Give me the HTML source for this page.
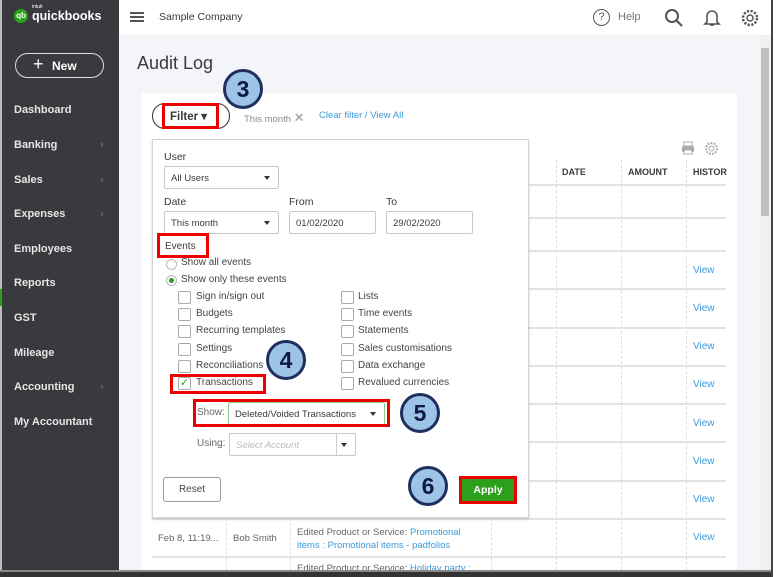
<!DOCTYPE html>
<html><head><style>
*{box-sizing:border-box;margin:0;padding:0}
body{width:778px;height:577px;overflow:hidden;background:#f4f5f8;font-family:"Liberation Sans",sans-serif;position:relative;color:#393a3d}
.a{position:absolute}
.sb{left:0;top:0;width:119px;height:570px;background:#393a3d;border-left:2px solid #bbb}
.nav{left:14px;color:#e6e6e6;font-size:11px;font-weight:bold}
.chev{left:100px;color:#777;font-size:11px}
.top{left:119px;top:0;width:652px;height:35px;background:#fff}
.card{left:142px;top:93px;width:595px;height:477px;background:#fff}
.vl{width:0;border-left:1px dashed #ddd}
.hl{height:2px;background:#e3e3e3}
.view{color:#3b9ad9;font-size:10px}
.pop{left:152px;top:139px;width:377px;height:379px;background:#fff;border:1px solid #d4d4d4;box-shadow:0 1px 3px rgba(0,0,0,.15)}
.lbl{font-size:10.5px;color:#393a3d}
.inp{border:1px solid #c8c8c8;border-radius:2px;height:23px;font-size:9.5px;padding:6px 6px;background:#fff}
.tri{position:absolute;right:8px;top:9px;border-left:3.5px solid transparent;border-right:3.5px solid transparent;border-top:4px solid #333}
.cb{width:13px;height:13px;border:1px solid #aaa;border-radius:2px;background:#fff}
.ct{font-size:10px;color:#444}
.red{border:3px solid #e00}
.num{width:40px;height:40px;border-radius:50%;background:#9dc3e6;border:3px solid #1f2f5e;color:#0e1b40;font-weight:bold;font-size:23px;text-align:center;line-height:34px}
</style></head><body>
<div class="a sb"></div>
<div class="a" style="left:14px;top:9px;width:14px;height:14px;border-radius:50%;background:#2ca01c;color:#fff;font-size:8px;font-weight:bold;text-align:center;line-height:14px">qb</div>
<div class="a" style="left:32px;top:4px;color:#fff;font-size:5px">intuit</div>
<div class="a" style="left:32px;top:9px;color:#fff;font-size:12.5px;font-weight:bold">quickbooks</div>
<div class="a" style="left:15px;top:53px;width:89px;height:25px;border:1.5px solid #ddd;border-radius:13px;color:#fff;font-size:12px;font-weight:bold;padding:5px 0 0 28px"><span style="font-weight:normal;font-size:18px;position:absolute;left:17px;top:0px">+</span><span style="margin-left:8px">New</span></div>
<div class="a nav" style="top:104px">Dashboard</div>
<div class="a nav" style="top:139px">Banking</div><div class="a chev" style="top:139px">›</div>
<div class="a nav" style="top:174px">Sales</div><div class="a chev" style="top:174px">›</div>
<div class="a nav" style="top:208px">Expenses</div><div class="a chev" style="top:208px">›</div>
<div class="a nav" style="top:243px">Employees</div>
<div class="a nav" style="top:277px">Reports</div>
<div class="a" style="left:0;top:289px;width:2px;height:17px;background:#2ca01c"></div>
<div class="a nav" style="top:312px">GST</div>
<div class="a nav" style="top:347px">Mileage</div>
<div class="a nav" style="top:381px">Accounting</div><div class="a chev" style="top:381px">›</div>
<div class="a nav" style="top:416px">My Accountant</div>

<div class="a top"></div>
<div class="a" style="left:130px;top:12px;width:14px;height:2px;background:#555;box-shadow:0 4px 0 #555,0 8px 0 #555"></div>
<div class="a" style="left:159px;top:11px;font-size:10.5px;color:#393a3d">Sample Company</div>
<div class="a" style="left:593px;top:9px;width:17px;height:17px;border:1.5px solid #555;border-radius:50%;font-size:11px;text-align:center;line-height:14px;color:#555">?</div>
<div class="a" style="left:618px;top:11px;font-size:11px;color:#777">Help</div>
<svg class="a" style="left:664px;top:8px" width="20" height="20"><circle cx="8" cy="8" r="6" fill="none" stroke="#555" stroke-width="2"/><line x1="12" y1="12" x2="18" y2="18" stroke="#555" stroke-width="2.2"/></svg>
<svg class="a" style="left:703px;top:8px" width="18" height="20"><path d="M4 14V8a5 5 0 0 1 10 0v6l2 2H2z" fill="none" stroke="#555" stroke-width="1.6"/><path d="M7 17h4" stroke="#555" stroke-width="1.6"/></svg>
<svg class="a" style="left:740px;top:8px" width="20" height="20"><circle cx="10" cy="10" r="3" fill="none" stroke="#555" stroke-width="1.5"/><circle cx="10" cy="10" r="7" fill="none" stroke="#555" stroke-width="2.5" stroke-dasharray="2.2 1.5"/></svg>
<div class="a" style="left:760px;top:35px;width:11px;height:535px;background:#f0f0f0"></div>
<div class="a" style="left:761px;top:48px;width:8px;height:168px;background:#c1c1c1"></div>
<div class="a" style="left:771px;top:0;width:7px;height:577px;background:#fff;border-left:2px solid #444"></div>

<div class="a" style="left:137px;top:53px;font-size:18px;color:#393a3d">Audit Log</div>
<div class="a card"></div>
<div class="a" style="left:152px;top:103px;width:78px;height:26px;border:1.5px solid #333;border-radius:13px"></div>
<div class="a red" style="left:162px;top:103px;width:57px;height:26px"></div>
<div class="a" style="left:170px;top:109px;font-size:11.5px;font-weight:bold">Filter ▾</div>
<div class="a" style="left:244px;top:110px;font-size:9.5px;color:#888">This month <span style="font-size:13px;color:#999">✕</span></div>
<div class="a" style="left:319px;top:110px;font-size:9.5px;color:#3b9ad9">Clear filter / View All</div>
<svg class="a" style="left:681px;top:141px" width="14" height="14"><rect x="3" y="1" width="8" height="4" fill="none" stroke="#aaa"/><rect x="1" y="5" width="12" height="6" rx="1" fill="#aaa"/><rect x="3" y="9" width="8" height="4" fill="#fff" stroke="#aaa"/></svg>
<svg class="a" style="left:704px;top:141px" width="15" height="15"><circle cx="7.5" cy="7.5" r="2.5" fill="none" stroke="#aaa"/><circle cx="7.5" cy="7.5" r="5.5" fill="none" stroke="#aaa" stroke-width="2" stroke-dasharray="1.8 1.3"/></svg>
<div class="a" style="left:562px;top:167px;font-size:9px;font-weight:bold">DATE</div>
<div class="a" style="left:628px;top:167px;font-size:9px;font-weight:bold">AMOUNT</div>
<div class="a" style="left:693px;top:167px;font-size:9px;font-weight:bold">HISTOR</div>
<div class="a vl" style="left:556px;top:160px;height:410px"></div>
<div class="a vl" style="left:621px;top:160px;height:410px"></div>
<div class="a vl" style="left:686px;top:160px;height:410px"></div>
<div class="a vl" style="left:226px;top:518px;height:52px"></div>
<div class="a vl" style="left:290px;top:518px;height:52px"></div>
<div class="a vl" style="left:491px;top:518px;height:52px"></div>
<div class="a hl" style="left:529px;top:184px;width:197px"></div>
<div class="a hl" style="left:529px;top:217px;width:197px"></div>
<div class="a hl" style="left:529px;top:250px;width:197px"></div>
<div class="a hl" style="left:529px;top:288px;width:197px"></div>
<div class="a hl" style="left:529px;top:327px;width:197px"></div>
<div class="a hl" style="left:529px;top:365px;width:197px"></div>
<div class="a hl" style="left:529px;top:403px;width:197px"></div>
<div class="a hl" style="left:529px;top:441px;width:197px"></div>
<div class="a hl" style="left:529px;top:480px;width:197px"></div>
<div class="a hl" style="left:152px;top:518px;width:574px"></div>
<div class="a hl" style="left:152px;top:556px;width:574px"></div>
<div class="a view" style="left:693px;top:265px">View</div>
<div class="a view" style="left:693px;top:303px">View</div>
<div class="a view" style="left:693px;top:341px">View</div>
<div class="a view" style="left:693px;top:379px">View</div>
<div class="a view" style="left:693px;top:418px">View</div>
<div class="a view" style="left:693px;top:456px">View</div>
<div class="a view" style="left:693px;top:494px">View</div>
<div class="a view" style="left:693px;top:532px">View</div>
<div class="a" style="left:158px;top:533px;font-size:9.5px;color:#666">Feb 8, 11:19...</div>
<div class="a" style="left:233px;top:533px;font-size:9.5px;color:#666">Bob Smith</div>
<div class="a" style="left:297px;top:526px;font-size:9.5px;color:#666;line-height:13px">Edited Product or Service: <span style="color:#3b9ad9">Promotional<br>items : Promotional items - padfolios</span></div>
<div class="a" style="left:297px;top:563px;font-size:9.5px;color:#666">Edited Product or Service: <span style="color:#3b9ad9">Holiday party :</span></div>
<div class="a" style="left:0;top:570px;width:771px;height:7px;background:#333;border-top:2px solid #888"></div>

<div class="a pop"></div>
<div class="a lbl" style="left:164px;top:151px">User</div>
<div class="a inp" style="left:164px;top:166px;width:115px">All Users<span class="tri"></span></div>
<div class="a lbl" style="left:164px;top:196px">Date</div>
<div class="a lbl" style="left:289px;top:196px">From</div>
<div class="a lbl" style="left:386px;top:196px">To</div>
<div class="a inp" style="left:164px;top:211px;width:115px">This month<span class="tri"></span></div>
<div class="a inp" style="left:289px;top:211px;width:87px">01/02/2020</div>
<div class="a inp" style="left:386px;top:211px;width:87px">29/02/2020</div>
<div class="a red" style="left:157px;top:233px;width:52px;height:25px"></div>
<div class="a lbl" style="left:165px;top:241px;font-size:10px">Events</div>
<div class="a" style="left:166px;top:259px;width:11px;height:11px;border:1px solid #bbb;border-radius:50%;background:#fff"></div>
<div class="a ct" style="left:181px;top:257px">Show all events</div>
<div class="a" style="left:166px;top:275px;width:11px;height:11px;border:1px solid #bbb;border-radius:50%;background:#fff"><div style="margin:2px;width:5px;height:5px;border-radius:50%;background:#2ca01c"></div></div>
<div class="a ct" style="left:181px;top:274px">Show only these events</div>
<div class="a cb" style="left:178px;top:291px"></div><div class="a ct" style="left:196px;top:291px">Sign in/sign out</div>
<div class="a cb" style="left:178px;top:308px"></div><div class="a ct" style="left:196px;top:308px">Budgets</div>
<div class="a cb" style="left:178px;top:325px"></div><div class="a ct" style="left:196px;top:325px">Recurring templates</div>
<div class="a cb" style="left:178px;top:343px"></div><div class="a ct" style="left:196px;top:343px">Settings</div>
<div class="a cb" style="left:178px;top:360px"></div><div class="a ct" style="left:196px;top:360px">Reconciliations</div>
<div class="a cb" style="left:178px;top:377px;color:#2ca01c;font-size:11px;line-height:11px;text-align:center">✓</div><div class="a ct" style="left:196px;top:377px">Transactions</div>
<div class="a red" style="left:170px;top:374px;width:96px;height:20px"></div>
<div class="a cb" style="left:341px;top:291px"></div><div class="a ct" style="left:358px;top:291px">Lists</div>
<div class="a cb" style="left:341px;top:308px"></div><div class="a ct" style="left:358px;top:308px">Time events</div>
<div class="a cb" style="left:341px;top:325px"></div><div class="a ct" style="left:358px;top:325px">Statements</div>
<div class="a cb" style="left:341px;top:343px"></div><div class="a ct" style="left:358px;top:343px">Sales customisations</div>
<div class="a cb" style="left:341px;top:360px"></div><div class="a ct" style="left:358px;top:360px">Data exchange</div>
<div class="a cb" style="left:341px;top:377px"></div><div class="a ct" style="left:358px;top:377px">Revalued currencies</div>
<div class="a ct" style="left:197px;top:407px;color:#666">Show:</div>
<div class="a inp" style="left:228px;top:402px;width:157px;border-color:#8bc98b">Deleted/Voided Transactions<span class="tri"></span></div>
<div class="a red" style="left:193px;top:399px;width:197px;height:28px"></div>
<div class="a ct" style="left:197px;top:438px;color:#666">Using:</div>
<div class="a inp" style="left:229px;top:433px;width:127px;color:#bbb;font-style:italic">Select Account<span style="position:absolute;right:18px;top:0;height:21px;border-left:1px solid #ccc"></span><span class="tri"></span></div>
<div class="a" style="left:163px;top:477px;width:58px;height:25px;border:1px solid #999;border-radius:3px;font-size:10px;text-align:center;line-height:23px;color:#444">Reset</div>
<div class="a" style="left:459px;top:476px;width:58px;height:28px;border:3px solid #e00;background:#2ca01c;color:#fff;font-weight:bold;font-size:10.5px;text-align:center;line-height:22px">Apply</div>

<div class="a num" style="left:223px;top:69px">3</div>
<div class="a num" style="left:266px;top:340px">4</div>
<div class="a num" style="left:400px;top:393px">5</div>
<div class="a num" style="left:408px;top:466px">6</div>
</body></html>
